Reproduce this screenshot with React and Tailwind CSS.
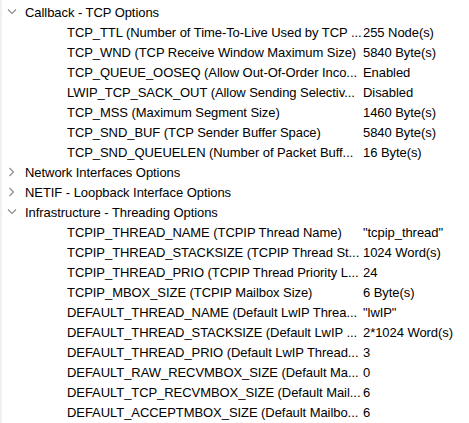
import React from "react";

const groups = [
  {
    title: "Callback - TCP Options",
    open: true,
    items: [
      ["TCP_TTL (Number of Time-To-Live Used by TCP ...", "255 Node(s)"],
      ["TCP_WND (TCP Receive Window Maximum Size)", "5840 Byte(s)"],
      ["TCP_QUEUE_OOSEQ (Allow Out-Of-Order Inco...", "Enabled"],
      ["LWIP_TCP_SACK_OUT (Allow Sending Selectiv...", "Disabled"],
      ["TCP_MSS (Maximum Segment Size)", "1460 Byte(s)"],
      ["TCP_SND_BUF (TCP Sender Buffer Space)", "5840 Byte(s)"],
      ["TCP_SND_QUEUELEN (Number of Packet Buff...", "16 Byte(s)"],
    ],
  },
  { title: "Network Interfaces Options", open: false, items: [] },
  { title: "NETIF - Loopback Interface Options", open: false, items: [] },
  {
    title: "Infrastructure - Threading Options",
    open: true,
    items: [
      ["TCPIP_THREAD_NAME (TCPIP Thread Name)", '"tcpip_thread"'],
      ["TCPIP_THREAD_STACKSIZE (TCPIP Thread St...", "1024 Word(s)"],
      ["TCPIP_THREAD_PRIO (TCPIP Thread Priority L...", "24"],
      ["TCPIP_MBOX_SIZE (TCPIP Mailbox Size)", "6 Byte(s)"],
      ["DEFAULT_THREAD_NAME (Default LwIP Threa...", '"lwIP"'],
      ["DEFAULT_THREAD_STACKSIZE (Default LwIP ...", "2*1024 Word(s)"],
      ["DEFAULT_THREAD_PRIO (Default LwIP Thread...", "3"],
      ["DEFAULT_RAW_RECVMBOX_SIZE (Default Ma...", "0"],
      ["DEFAULT_TCP_RECVMBOX_SIZE (Default Mail...", "6"],
      ["DEFAULT_ACCEPTMBOX_SIZE (Default Mailbo...", "6"],
    ],
  },
];

const Chevron = ({ open }) => (
  <svg width="16" height="16" viewBox="0 0 16 16" className="shrink-0" fill="none" stroke="#8a8a8a" strokeWidth="1.1">
    {open ? <path d="M3 4.5 L7 8.5 L11 4.5" /> : <path d="M4.5 3 L8.5 7 L4.5 11" />}
  </svg>
);

export default function App() {
  return (
    <div className="w-[469px] h-[423px] overflow-hidden bg-white border-l-2 border-[#f0f0f0] pt-[3px] text-[13px] leading-[20px] tracking-[-0.06px] text-black font-['Liberation_Sans',Arial,sans-serif]">
      {groups.map((g) => (
        <div key={g.title}>
          {/* group header */}
          <div className="flex items-center h-[20px] pl-[3px]">
            <Chevron open={g.open} />
            <span className="pl-[4px] whitespace-nowrap">{g.title}</span>
          </div>
          {g.open &&
            g.items.map(([name, value]) => (
              <div key={name} className="flex h-[20px] pl-[65px]">
                <div className="w-[295px] shrink-0 whitespace-nowrap overflow-hidden">{name}</div>
                <div className="pl-[1px] whitespace-nowrap">{value}</div>
              </div>
            ))}
        </div>
      ))}
    </div>
  );
}
